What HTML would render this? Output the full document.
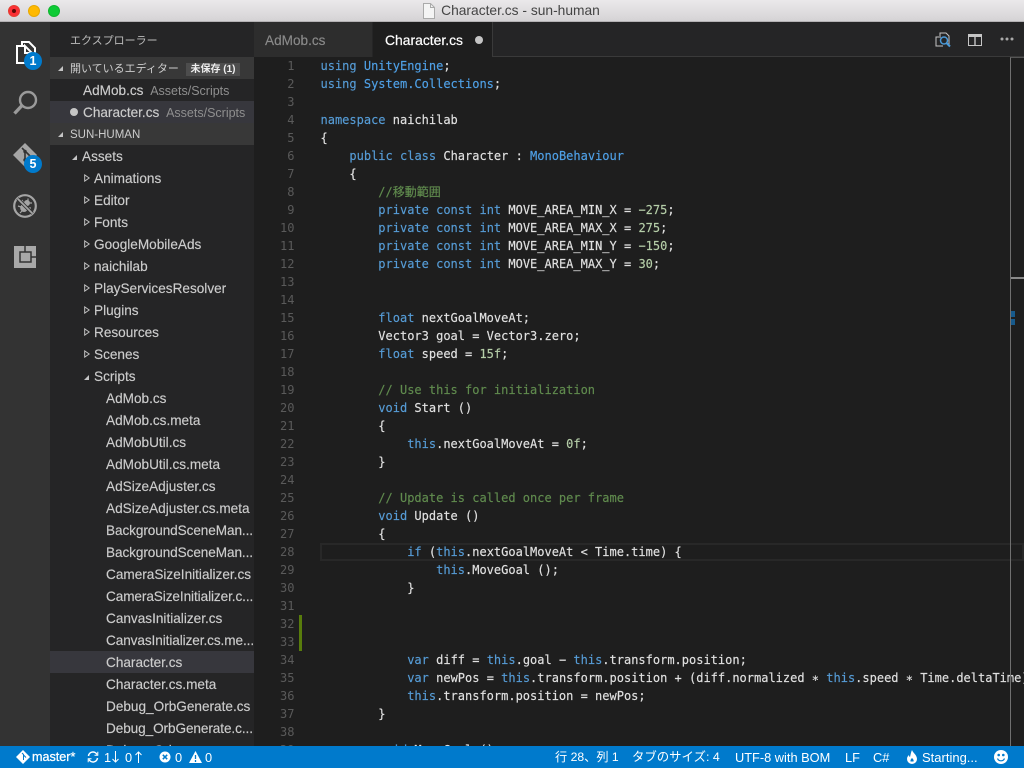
<!DOCTYPE html>
<html><head><meta charset="utf-8"><style>
*{margin:0;padding:0;box-sizing:border-box}
html,body{width:1024px;height:768px;overflow:hidden;background:#1e1e1e}
body{position:relative;font-family:"Liberation Sans","Noto Sans CJK JP",sans-serif;font-size:13px;color:#ccc}
.a{position:absolute}
#title{left:0;top:0;width:1024px;height:22px;background:linear-gradient(#ebe9eb,#d5d3d5);border-bottom:1px solid #b4b2b4;color:#444;text-align:center;line-height:22px;font-size:13.8px;padding-left:17px}
.dot{position:absolute;top:5px;width:12px;height:12px;border-radius:50%}
#act{left:0;top:22px;width:50px;height:724px;background:#333}
.badge{position:absolute;width:18px;height:18px;border-radius:50%;background:#007acc;color:#fff;font-size:12.5px;font-weight:bold;text-align:center;line-height:18px}
#side{left:50px;top:22px;width:204px;height:724px;background:#252526;overflow:hidden}
.r{position:absolute;left:0;width:204px;height:22px;line-height:24px;white-space:nowrap;overflow:hidden;color:#ccc;font-size:13.6px;-webkit-text-stroke:.15px #ccc}
.sec{background:#383838;font-size:11px;color:#ccc;-webkit-text-stroke:0}
.sel{background:#37373d}
.dim{color:#8f8f8f;font-size:12.5px;margin-left:3px;-webkit-text-stroke:0}
.tr{letter-spacing:-.09px}
.open{position:absolute;top:10px;width:0;height:0;border-left:5px solid transparent;border-bottom:5px solid #c5c5c5}
.closed{position:absolute;top:7px;width:6px;height:8px}
#tabs{left:254px;top:22px;width:770px;height:35px;background:#252526}
#code{left:254px;top:57px;width:770px;height:689px;background:#1e1e1e;overflow:hidden;font-family:"DejaVu Sans Mono","Liberation Mono",monospace;font-size:12px;line-height:18px}
.ln{position:absolute;left:0;width:40.5px;text-align:right;color:#5a5a5a;height:18px}
.l{position:absolute;left:66.5px;white-space:pre;height:18px;color:#e0e0e0;-webkit-text-stroke:.15px}
.k{color:#569cd6}.t{color:#4fa0e6}.c{color:#608b4e}.n{color:#b5cea8}
#status{left:0;top:746px;width:1024px;height:22px;background:#007acc;color:#fff;font-size:12.8px;line-height:23px}
#status span{position:absolute;top:0;white-space:nowrap}
</style></head><body>

<div id="title" class="a">
<svg class="a" style="left:422px;top:3px" width="14" height="16" viewBox="0 0 14 16"><path d="M1.5.5h7l4 4v11h-11z" fill="#f4f4f4" stroke="#aaa"/><path d="M8.5.5v4h4" fill="none" stroke="#aaa"/></svg>
Character.cs - sun-human
<div class="dot" style="left:8px;background:#fb2f35;border:1px solid #e33e32"><div class="a" style="left:3px;top:3px;width:4px;height:4px;border-radius:50%;background:#5c0a06"></div></div>
<div class="dot" style="left:28px;background:#ffb900;border:1px solid #e8a800"></div>
<div class="dot" style="left:48px;background:#0ecb36;border:1px solid #10b52f"></div>
</div>

<div id="act" class="a">
<svg class="a" style="left:15px;top:18px" width="22" height="26" viewBox="0 0 22 26" fill="none" stroke="#fff" stroke-width="2"><path d="M10 6H2v17h15V13l-7-7v7h7"/><path d="M7 5V2h7l6 6v12h-3"/></svg>
<div class="badge" style="left:24px;top:30px">1</div>
<svg class="a" style="left:12px;top:68px" width="26" height="26" viewBox="0 0 26 26" fill="none" stroke="#9a9a9a"><circle cx="16" cy="10" r="8" stroke-width="2.4"/><path d="M10 15.500 2.500 23.500" stroke-width="3.400"/></svg>
<svg class="a" style="left:12px;top:120px" width="26" height="26" viewBox="0 0 26 26"><path d="M13 1 25 13 13 25 1 13z" fill="#a5a5a5"/><path d="M10 6 13 9V18M13 9l5 5" stroke="#333" stroke-width="1.600" fill="none"/><circle cx="13" cy="9.500" r="1.700" fill="#333"/><circle cx="13" cy="18" r="1.700" fill="#333"/></svg>
<div class="badge" style="left:24px;top:133px">5</div>
<svg class="a" style="left:13px;top:172px" width="24" height="24" viewBox="0 0 24 24" fill="none" stroke="#a5a5a5"><circle cx="12" cy="12" r="10.800" stroke-width="2.200"/><ellipse cx="11" cy="14" rx="3.800" ry="4" fill="#a5a5a5" stroke="none"/><circle cx="14" cy="9" r="3" fill="#a5a5a5" stroke="none"/><path d="M9 6l1.500 3M15 4.500v2M19 9h-2M5 12l3 1M18 14h-3M7 19l2-2" stroke-width="1.200"/><path d="M4.500 4.500l15 15" stroke="#333" stroke-width="3.400"/><path d="M4.500 4.500l15 15" stroke-width="1.800"/></svg>
<svg class="a" style="left:14px;top:224px" width="22" height="22" viewBox="0 0 22 22"><rect width="22" height="22" fill="#a8a8a8"/><path d="M11 0v6M17 11h5M11 6H6v10h11V6h-6" stroke="#333" stroke-width="1.500" fill="none"/></svg>
</div>

<div id="side" class="a">
<div class="a" style="left:20px;top:11px;font-size:11px;color:#bbb;line-height:16px">エクスプローラー</div>
<div class="r sec" style="top:35px"><div class="open" style="left:8px;top:9px"></div><span class="a" style="left:20px;font-size:11px">開いているエディター</span><span class="a" style="left:136px;top:6px;width:54px;height:13px;line-height:14px;background:#4d4d4d;text-align:center;font-size:10px;font-weight:bold;color:#eee">未保存 (1)</span></div>
<div class="r" style="top:57px;padding-left:33px">AdMob.cs <span class="dim">Assets/Scripts</span></div>
<div class="r sel" style="top:79px;padding-left:33px"><div class="a" style="left:20px;top:7px;width:8px;height:8px;border-radius:50%;background:#c5c5c5"></div>Character.cs <span class="dim">Assets/Scripts</span></div>
<div class="r sec" style="top:101px"><div class="open" style="left:8px;top:9px"></div><span class="a" style="left:20px;font-size:11.5px">SUN-HUMAN</span></div>
<div class="r" style="top:123px;padding-left:32px"><div class="open" style="left:22px"></div>Assets</div>
<div class="r" style="top:145px;padding-left:44px"><svg class="closed" style="left:34px" viewBox="0 0 6 8"><path d="M.7.9 5.200 4 .7 7.100z" fill="none" stroke="#c5c5c5"/></svg>Animations</div>
<div class="r" style="top:167px;padding-left:44px"><svg class="closed" style="left:34px" viewBox="0 0 6 8"><path d="M.7.9 5.200 4 .7 7.100z" fill="none" stroke="#c5c5c5"/></svg>Editor</div>
<div class="r" style="top:189px;padding-left:44px"><svg class="closed" style="left:34px" viewBox="0 0 6 8"><path d="M.7.9 5.200 4 .7 7.100z" fill="none" stroke="#c5c5c5"/></svg>Fonts</div>
<div class="r" style="top:211px;padding-left:44px"><svg class="closed" style="left:34px" viewBox="0 0 6 8"><path d="M.7.9 5.200 4 .7 7.100z" fill="none" stroke="#c5c5c5"/></svg>GoogleMobileAds</div>
<div class="r" style="top:233px;padding-left:44px"><svg class="closed" style="left:34px" viewBox="0 0 6 8"><path d="M.7.9 5.200 4 .7 7.100z" fill="none" stroke="#c5c5c5"/></svg>naichilab</div>
<div class="r" style="top:255px;padding-left:44px"><svg class="closed" style="left:34px" viewBox="0 0 6 8"><path d="M.7.9 5.200 4 .7 7.100z" fill="none" stroke="#c5c5c5"/></svg>PlayServicesResolver</div>
<div class="r" style="top:277px;padding-left:44px"><svg class="closed" style="left:34px" viewBox="0 0 6 8"><path d="M.7.9 5.200 4 .7 7.100z" fill="none" stroke="#c5c5c5"/></svg>Plugins</div>
<div class="r" style="top:299px;padding-left:44px"><svg class="closed" style="left:34px" viewBox="0 0 6 8"><path d="M.7.9 5.200 4 .7 7.100z" fill="none" stroke="#c5c5c5"/></svg>Resources</div>
<div class="r" style="top:321px;padding-left:44px"><svg class="closed" style="left:34px" viewBox="0 0 6 8"><path d="M.7.9 5.200 4 .7 7.100z" fill="none" stroke="#c5c5c5"/></svg>Scenes</div>
<div class="r" style="top:343px;padding-left:44px"><div class="open" style="left:34px"></div>Scripts</div>
<div class="r" style="top:365px;padding-left:56px">AdMob.cs</div>
<div class="r" style="top:387px;padding-left:56px">AdMob.cs.meta</div>
<div class="r" style="top:409px;padding-left:56px">AdMobUtil.cs</div>
<div class="r" style="top:431px;padding-left:56px">AdMobUtil.cs.meta</div>
<div class="r" style="top:453px;padding-left:56px">AdSizeAdjuster.cs</div>
<div class="r" style="top:475px;padding-left:56px">AdSizeAdjuster.cs.meta</div>
<div class="r tr" style="top:497px;padding-left:56px">BackgroundSceneMan...</div>
<div class="r tr" style="top:519px;padding-left:56px">BackgroundSceneMan...</div>
<div class="r" style="top:541px;padding-left:56px">CameraSizeInitializer.cs</div>
<div class="r tr" style="top:563px;padding-left:56px">CameraSizeInitializer.c...</div>
<div class="r" style="top:585px;padding-left:56px">CanvasInitializer.cs</div>
<div class="r tr" style="top:607px;padding-left:56px">CanvasInitializer.cs.me...</div>
<div class="r sel" style="top:629px;padding-left:56px">Character.cs</div>
<div class="r" style="top:651px;padding-left:56px">Character.cs.meta</div>
<div class="r" style="top:673px;padding-left:56px">Debug_OrbGenerate.cs</div>
<div class="r tr" style="top:695px;padding-left:56px">Debug_OrbGenerate.c...</div>
<div class="r" style="top:717px;padding-left:56px">Debug_Orb.cs</div>
</div>

<div id="tabs" class="a">
<div class="a" style="left:0;top:0;width:119px;height:35px;background:#2d2d2d;border-right:1px solid #252526;line-height:37px;padding-left:11px;color:#8a8a8a;font-size:13.6px;-webkit-text-stroke:.15px #8a8a8a">AdMob.cs</div>
<div class="a" style="left:119px;top:0;width:120px;height:35px;background:#1e1e1e;border-right:1px solid #3a3a3a;line-height:37px;padding-left:12px;color:#fff;font-size:13.9px;-webkit-text-stroke:.2px #fff">Character.cs<div class="a" style="left:102px;top:14px;width:8px;height:8px;border-radius:50%;background:#c5c5c5"></div></div>
<div class="a" style="left:239px;top:34px;width:531px;height:1px;background:#3a3a3a"></div>
<svg class="a" style="left:681px;top:10px" width="18" height="18" viewBox="0 0 18 18" fill="none"><path d="M6 5H1v9h7M5 4V1h6l3 3v9" stroke="#c5c5c5" stroke-width="1"/><circle cx="9" cy="8.500" r="3.500" stroke="#4b9ad8" stroke-width="1.500"/><path d="M11.500 11l3.500 3.500" stroke="#4b9ad8" stroke-width="2"/></svg>
<svg class="a" style="left:714px;top:12px" width="14" height="12" viewBox="0 0 14 12"><path d="M0 0h14v12H0z" fill="#c5c5c5"/><path d="M1 3h5.300v8H1zM7.700 3H13v8H7.700z" fill="#252526"/></svg>
<svg class="a" style="left:746px;top:15px" width="14" height="4" viewBox="0 0 14 4" fill="#aaa"><circle cx="2" cy="2" r="1.500"/><circle cx="7" cy="2" r="1.500"/><circle cx="12" cy="2" r="1.500"/></svg>
</div>

<div id="code" class="a">
<div class="a" style="left:66px;top:486px;width:704px;height:18px;border:2px solid #282828"></div>
<div class="a" style="left:45px;top:558px;width:3px;height:36px;background:#587c0c"></div>
<div class="ln" style="top:0">1</div><div class="l" style="top:0"><span class="k">using</span> <span class="t">UnityEngine</span>;</div>
<div class="ln" style="top:18px">2</div><div class="l" style="top:18px"><span class="k">using</span> <span class="t">System.Collections</span>;</div>
<div class="ln" style="top:36px">3</div>
<div class="ln" style="top:54px">4</div><div class="l" style="top:54px"><span class="k">namespace</span> naichilab</div>
<div class="ln" style="top:72px">5</div><div class="l" style="top:72px">{</div>
<div class="ln" style="top:90px">6</div><div class="l" style="top:90px">    <span class="k">public</span> <span class="k">class</span> Character : <span class="t">MonoBehaviour</span></div>
<div class="ln" style="top:108px">7</div><div class="l" style="top:108px">    {</div>
<div class="ln" style="top:126px">8</div><div class="l c" style="top:126px;font-family:'DejaVu Sans Mono','Noto Sans CJK JP',monospace">        //移動範囲</div>
<div class="ln" style="top:144px">9</div><div class="l" style="top:144px">        <span class="k">private</span> <span class="k">const</span> <span class="k">int</span> MOVE_AREA_MIN_X = <span class="n">−275</span>;</div>
<div class="ln" style="top:162px">10</div><div class="l" style="top:162px">        <span class="k">private</span> <span class="k">const</span> <span class="k">int</span> MOVE_AREA_MAX_X = <span class="n">275</span>;</div>
<div class="ln" style="top:180px">11</div><div class="l" style="top:180px">        <span class="k">private</span> <span class="k">const</span> <span class="k">int</span> MOVE_AREA_MIN_Y = <span class="n">−150</span>;</div>
<div class="ln" style="top:198px">12</div><div class="l" style="top:198px">        <span class="k">private</span> <span class="k">const</span> <span class="k">int</span> MOVE_AREA_MAX_Y = <span class="n">30</span>;</div>
<div class="ln" style="top:216px">13</div>
<div class="ln" style="top:234px">14</div>
<div class="ln" style="top:252px">15</div><div class="l" style="top:252px">        <span class="k">float</span> nextGoalMoveAt;</div>
<div class="ln" style="top:270px">16</div><div class="l" style="top:270px">        Vector3 goal = Vector3.zero;</div>
<div class="ln" style="top:288px">17</div><div class="l" style="top:288px">        <span class="k">float</span> speed = <span class="n">15f</span>;</div>
<div class="ln" style="top:306px">18</div>
<div class="ln" style="top:324px">19</div><div class="l c" style="top:324px">        // Use this for initialization</div>
<div class="ln" style="top:342px">20</div><div class="l" style="top:342px">        <span class="k">void</span> Start ()</div>
<div class="ln" style="top:360px">21</div><div class="l" style="top:360px">        {</div>
<div class="ln" style="top:378px">22</div><div class="l" style="top:378px">            <span class="k">this</span>.nextGoalMoveAt = <span class="n">0f</span>;</div>
<div class="ln" style="top:396px">23</div><div class="l" style="top:396px">        }</div>
<div class="ln" style="top:414px">24</div>
<div class="ln" style="top:432px">25</div><div class="l c" style="top:432px">        // Update is called once per frame</div>
<div class="ln" style="top:450px">26</div><div class="l" style="top:450px">        <span class="k">void</span> Update ()</div>
<div class="ln" style="top:468px">27</div><div class="l" style="top:468px">        {</div>
<div class="ln" style="top:486px">28</div><div class="l" style="top:486px">            <span class="k">if</span> (<span class="k">this</span>.nextGoalMoveAt &lt; Time.time) {</div>
<div class="ln" style="top:504px">29</div><div class="l" style="top:504px">                <span class="k">this</span>.MoveGoal ();</div>
<div class="ln" style="top:522px">30</div><div class="l" style="top:522px">            }</div>
<div class="ln" style="top:540px">31</div>
<div class="ln" style="top:558px">32</div>
<div class="ln" style="top:576px">33</div>
<div class="ln" style="top:594px">34</div><div class="l" style="top:594px">            <span class="k">var</span> diff = <span class="k">this</span>.goal − <span class="k">this</span>.transform.position;</div>
<div class="ln" style="top:612px">35</div><div class="l" style="top:612px">            <span class="k">var</span> newPos = <span class="k">this</span>.transform.position + (diff.normalized ∗ <span class="k">this</span>.speed ∗ Time.deltaTime);</div>
<div class="ln" style="top:630px">36</div><div class="l" style="top:630px">            <span class="k">this</span>.transform.position = newPos;</div>
<div class="ln" style="top:648px">37</div><div class="l" style="top:648px">        }</div>
<div class="ln" style="top:666px">38</div>
<div class="ln" style="top:684px">39</div><div class="l" style="top:684px">        <span class="k">void</span> MoveGoal ()</div>
<div class="a" style="left:756px;top:0;width:14px;height:689px;border-left:1px solid #707070;border-top:1px solid #555"></div>
<div class="a" style="left:757px;top:220px;width:13px;height:2px;background:#8a8a8a"></div>
<div class="a" style="left:757px;top:254px;width:4px;height:6px;background:#175a8c"></div>
<div class="a" style="left:757px;top:262px;width:4px;height:6px;background:#175a8c"></div>
</div>

<div id="status" class="a">
<svg class="a" style="left:16px;top:4px" width="14" height="14" viewBox="0 0 14 14"><path d="M7 0 14 7 7 14 0 7z" fill="#fff"/><path d="M6 3l1.500 1.500V10M7.500 5l2.500 2.500" stroke="#007acc" fill="none"/></svg>
<span style="left:32px;font-size:12.6px;-webkit-text-stroke:.25px #fff">master*</span>
<svg class="a" style="left:87px;top:5px" width="12" height="12" viewBox="0 0 12 12" fill="none" stroke="#fff" stroke-width="1.500"><path d="M1.500 5A4.500 4.500 0 0 1 10 3.500M10.500 7A4.500 4.500 0 0 1 2 8.500"/><path d="M10.800.8v3.400H7.500M1.200 11.200V7.800h3.300" stroke-width="1"/></svg>
<span style="left:104px">1</span>
<svg class="a" style="left:112px;top:5px" width="7" height="12" viewBox="0 0 7 12" fill="none" stroke="#fff"><path d="M3.500 0v11M.5 8l3 3 3-3"/></svg>
<span style="left:125px">0</span>
<svg class="a" style="left:135px;top:5px" width="7" height="12" viewBox="0 0 7 12" fill="none" stroke="#fff"><path d="M3.500 12V1M.5 4l3-3 3 3"/></svg>
<svg class="a" style="left:159px;top:5px" width="12" height="12" viewBox="0 0 12 12"><circle cx="6" cy="6" r="5.500" fill="#fff"/><path d="M3.800 3.800l4.400 4.400M8.200 3.800 3.800 8.200" stroke="#007acc" stroke-width="1.500"/></svg>
<span style="left:175px">0</span>
<svg class="a" style="left:189px;top:5px" width="13" height="12" viewBox="0 0 13 12"><path d="M6.500 0 13 12H0z" fill="#fff"/><path d="M6.500 4v4M6.500 9v2" stroke="#007acc" stroke-width="1.300"/></svg>
<span style="left:205px">0</span>
<span style="left:555px;font-size:12.2px">行 28、列 1</span>
<span style="left:632px;font-size:12.4px">タブのサイズ: 4</span>
<span style="left:735px">UTF-8 with BOM</span>
<span style="left:845px">LF</span>
<span style="left:873px">C#</span>
<svg class="a" style="left:906px;top:4px" width="12" height="14" viewBox="0 0 12 14"><path d="M6 0c1 3 5 5 5 9a5 5 0 0 1-10 0c0-2 1-3 2-4 0 1 .5 2 1 2C4.500 5 5 2 6 0z" fill="#fff"/><path d="M6 8c1 1 2 2 1.500 3.500h-3C4.200 10 5 9 6 8z" fill="#007acc"/></svg>
<span style="left:922px;font-size:13px">Starting...</span>
<svg class="a" style="left:994px;top:4px" width="14" height="14" viewBox="0 0 14 14"><circle cx="7" cy="7" r="7" fill="#fff"/><circle cx="4.700" cy="5" r="1.300" fill="#007acc"/><circle cx="9.300" cy="5" r="1.300" fill="#007acc"/><path d="M3.500 8.500a3.800 3.800 0 0 0 7 0" stroke="#007acc" stroke-width="1.200" fill="none"/></svg>
</div>
</body></html>
